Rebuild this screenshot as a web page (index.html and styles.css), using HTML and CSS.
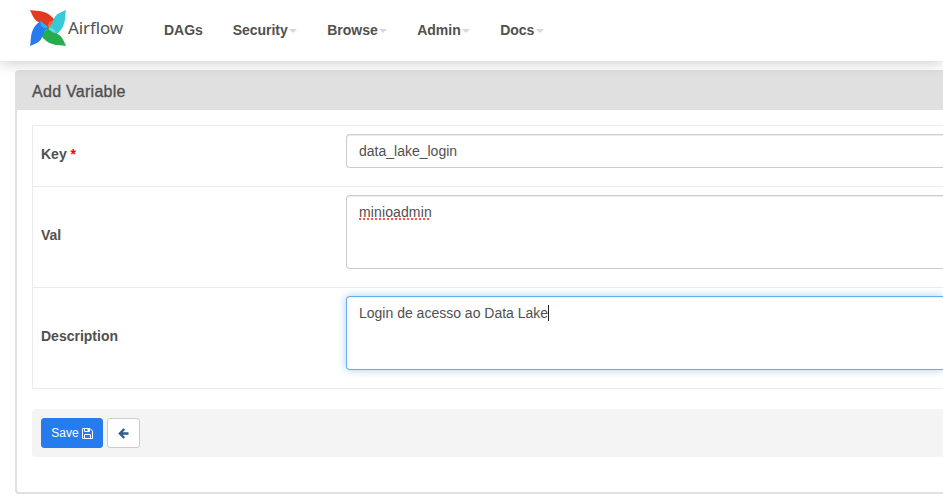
FILE: index.html
```html
<!DOCTYPE html>
<html lang="en">
<head>
<meta charset="utf-8">
<title>Airflow - Add Variable</title>
<link rel="stylesheet" href="styles.css">
</head>
<body>
<header class="navbar">
  <a class="brand">
    <svg class="pinwheel" viewBox="-18 -18 36 36">
      <g>
        <path fill="#e43921" d="M-18-18C-14-17-9-17.500-5-16.300C0-15 4-12 7-7.500L5-5L0 0C-3-5-8-4.500-12-7.500C-15-10-16-14-18-18Z"/>
        <path fill="#f9603f" d="M0 0C-1-5 2-8 7-7.500L5-5Z"/>
      </g>
      <g transform="rotate(90)">
        <path fill="#36c9d8" d="M-18-18C-14-17-9-17.500-5-16.300C0-15 4-12 7-7.500L5-5L0 0C-3-5-8-4.500-12-7.500C-15-10-16-14-18-18Z"/>
        <path fill="#5fe0db" d="M0 0C-1-5 2-8 7-7.500L5-5Z"/>
      </g>
      <g transform="rotate(180)">
        <path fill="#27ac4b" d="M-18-18C-14-17-9-17.500-5-16.300C0-15 4-12 7-7.500L5-5L0 0C-3-5-8-4.500-12-7.500C-15-10-16-14-18-18Z"/>
        <path fill="#12b84d" d="M0 0C-1-5 2-8 7-7.500L5-5Z"/>
      </g>
      <g transform="rotate(270)">
        <path fill="#267bef" d="M-18-18C-14-17-9-17.500-5-16.300C0-15 4-12 7-7.500L5-5L0 0C-3-5-8-4.500-12-7.500C-15-10-16-14-18-18Z"/>
        <path fill="#20b5f2" d="M0 0C-1-5 2-8 7-7.500L5-5Z"/>
      </g>
      <circle r=".8" fill="#51504f"/>
    </svg>
    <span class="brand-name">Airflow</span>
  </a>
  <nav class="menu">
    <a>DAGs</a>
    <a>Security<i class="caret"></i></a>
    <a>Browse<i class="caret"></i></a>
    <a>Admin<i class="caret"></i></a>
    <a>Docs<i class="caret"></i></a>
  </nav>
</header>
<main class="panel">
  <h4 class="panel-heading">Add Variable</h4>
  <div class="panel-body">
    <div class="form-table">
      <div class="row row-short">
        <label>Key <b class="required">*</b></label>
        <div class="control">data_lake_login</div>
      </div>
      <div class="row">
        <label>Val</label>
        <div class="control area"><span class="misspelled">minioadmin</span></div>
      </div>
      <div class="row">
        <label>Description</label>
        <div class="control area focused">Login de acesso ao Data Lake<i class="cursor"></i></div>
      </div>
    </div>
    <div class="actions">
      <button class="btn save">Save
        <svg class="floppy" viewBox="0 0 11 11" fill="none" stroke="currentColor">
          <path d="M.5.5H8L10.500 3V10.500H.5Z M2.500 10.500V6.500H8.500V10.500 M2.500.5V3.500H7.500V.5"/>
          <path d="M5.500 1H7V3H5.500Z" fill="currentColor" stroke="none"/>
        </svg>
      </button>
      <button class="btn back" aria-label="Back">
        <svg class="arrow" viewBox="0 0 11 11" fill="none" stroke="currentColor" stroke-width="2.400">
          <path d="M6.300 1L1.900 5.500L6.300 10M2 5.500H10.500"/>
        </svg>
      </button>
    </div>
  </div>
</main>
</body>
</html>
```
FILE: styles.css
```css
* { box-sizing: border-box; }
body {
  margin: 0;
  overflow: hidden;
  background: #fff;
  color: #51504f;
  font: 14px/20px "Liberation Sans", Arial, sans-serif;
}
.navbar {
  position: relative;
  display: flex;
  height: 61px;
  padding-left: 30px;
  background: #fff;
  box-shadow: 0 2px 14px rgba(0, 0, 0, .2);
}
.brand {
  display: flex;
  width: 134px;
  padding-top: 10px;
}
.pinwheel { width: 36px; height: 36px; }
.brand-name {
  margin: 6px 0 0 2px;
  font: 17px/24px "Noto Sans", sans-serif;
  letter-spacing: -.1px;
}
.menu {
  display: flex;
  align-items: flex-start;
  gap: 29.900px;
  padding-top: 20px;
  font-weight: bold;
  letter-spacing: -.03px;
}
.menu a { display: flex; align-items: center; }
.caret {
  width: 8px;
  margin: 2px 0 0 1.700px;
  border: 4px solid transparent;
  border-top-color: #e4cfe6;
  border-bottom: 0;
}
.panel {
  height: 424px;
  margin: 9px 0 0 15px;
  border: 2px solid #e0e0e0;
  border-right: 0;
  border-radius: 4px 0 0 4px;
}
.panel-heading {
  height: 38px;
  margin: 0;
  padding: 10px 15px 8px;
  background: #e0e0e0;
  font-size: 16px;
  font-weight: normal;
  line-height: 20px;
  letter-spacing: .28px;
  -webkit-text-stroke: .35px;
}
.panel-body { padding: 15px 0 15px 15px; }
.form-table {
  border-bottom: 1px solid #edecec;
  border-left: 1px solid #edecec;
}
.row {
  display: flex;
  height: 101px;
  padding: 8px 0 8px 8px;
  border-top: 1px solid #edecec;
}
.row-short { height: 61px; }
.row label {
  flex: none;
  width: 305px;
  align-self: center;
  padding-bottom: 4px;
  font-weight: bold;
}
.required { color: #f00; }
.control {
  flex: 1;
  height: 34px;
  padding: 6px 12px;
  border: 1px solid #ccc;
  border-right: 0;
  border-radius: 4px 0 0 4px;
  box-shadow: inset 0 1px 1px rgba(0, 0, 0, .075);
}
.area { height: 74px; }
.misspelled {
  letter-spacing: .12px;
  text-decoration: underline dotted #ff5147 2px;
  text-decoration-skip-ink: none;
  text-underline-offset: 1px;
}
.focused {
  border-color: #66afe9;
  box-shadow: inset 0 1px 1px rgba(0, 0, 0, .075), 0 0 8px rgba(102, 175, 233, .6);
}
.cursor {
  display: inline-block;
  width: 1px;
  height: 16px;
  background: #222;
  vertical-align: -3px;
}
.actions {
  display: flex;
  gap: 4px;
  height: 48px;
  margin-top: 20px;
  padding: 9px;
  border-radius: 4px 0 0 4px;
  background: #f4f4f4;
}
.btn {
  display: flex;
  align-items: center;
  justify-content: center;
  gap: 3px;
  height: 30px;
  padding: 0;
  border: 1px solid #ccc;
  border-radius: 3px;
  background: #fff;
  font: 12px/18px "Liberation Sans", Arial, sans-serif;
}
.save {
  width: 62px;
  border-color: #267bef;
  background: #267bef;
  color: #fff;
}
.back { width: 33px; color: #315d86; }
.floppy, .arrow { width: 11px; height: 11px; }
```
